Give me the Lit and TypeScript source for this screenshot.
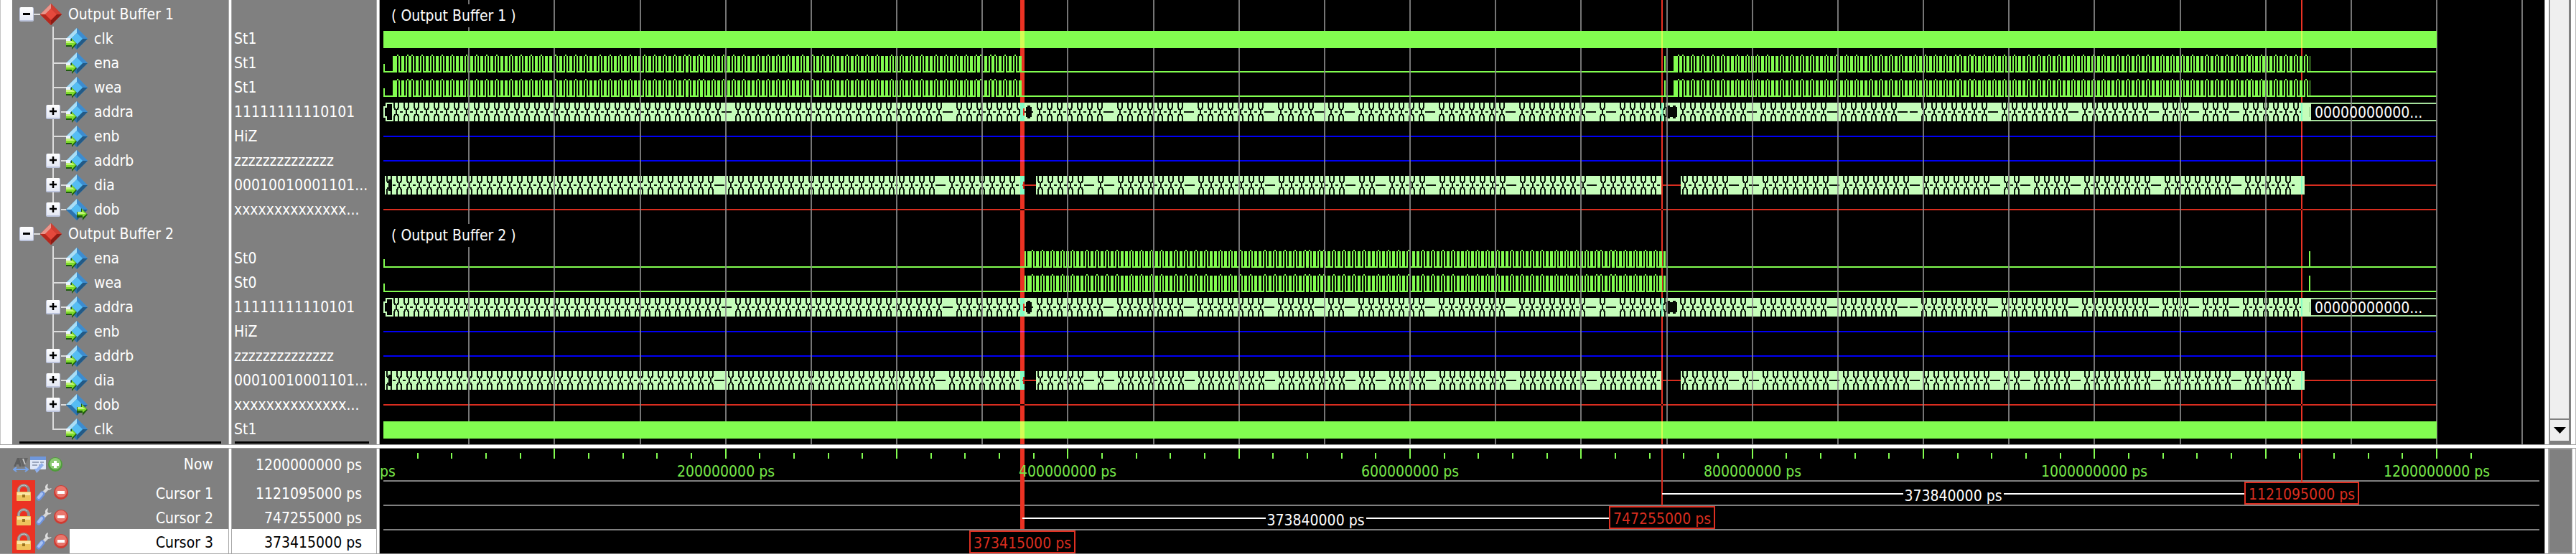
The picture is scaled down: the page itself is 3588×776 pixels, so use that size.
import { LitElement, html, svg, css } from "lit";
import { customElement } from "lit/decorators.js";

type Kind = "group" | "in" | "out";
interface Signal {
  name: string;
  value: string;
  kind: Kind;
  bus?: boolean;
  last?: boolean;
}

const SIGNALS: Signal[] = [
  { name: "Output Buffer 1", value: "", kind: "group" },
  { name: "clk", value: "St1", kind: "in" },
  { name: "ena", value: "St1", kind: "in" },
  { name: "wea", value: "St1", kind: "in" },
  { name: "addra", value: "11111111110101", kind: "in", bus: true },
  { name: "enb", value: "HiZ", kind: "in" },
  { name: "addrb", value: "zzzzzzzzzzzzzz", kind: "in", bus: true },
  { name: "dia", value: "00010010001101...", kind: "in", bus: true },
  { name: "dob", value: "xxxxxxxxxxxxxx...", kind: "out", bus: true, last: true },
  { name: "Output Buffer 2", value: "", kind: "group" },
  { name: "ena", value: "St0", kind: "in" },
  { name: "wea", value: "St0", kind: "in" },
  { name: "addra", value: "11111111110101", kind: "in", bus: true },
  { name: "enb", value: "HiZ", kind: "in" },
  { name: "addrb", value: "zzzzzzzzzzzzzz", kind: "in", bus: true },
  { name: "dia", value: "00010010001101...", kind: "in", bus: true },
  { name: "dob", value: "xxxxxxxxxxxxxx...", kind: "out", bus: true },
  { name: "clk", value: "St1", kind: "in", last: true },
];

const CURSORS = [
  { name: "Cursor 1", time: 1121095000 },
  { name: "Cursor 2", time: 747255000 },
  { name: "Cursor 3", time: 373415000 },
];
const NOW = 1200000000;

/* Plot units: one row is 34 high, the time axis starts at 5 and is 2860 long. */
const VIEW = 3015;
const ROW = 34;
const TOP = 3;
const START = 5;
const SPAN = 2860;
const END = START + SPAN;
const at = (t: number) => Math.round(START + (SPAN * t) / NOW);
const pct = (x: number) => `${(x / VIEW) * 100}%`;
const C1 = at(CURSORS[0].time);
const C2 = at(CURSORS[1].time);
const C3 = at(CURSORS[2].time);
const MARKS: [number, number][] = [[C3 - 3, 6], [C2 - 1, 2], [C1 - 1, 2]];

const GREEN = "#82fd50";
const PALE = "#c5fdba";
const box = (x: number, y: number, w: number, h: number) => `M${x} ${y}h${w}v${h}h${-w}z`;

const PITCH = [14, 6, 14, 14, 14, 14, 20, 14, 14, 14, 20, 14, 14, 14, 20, 14, 14, 14, 20, 14, 14, 14, 20, 14, 14, 14, 14, 6];

/* Enable bursts: narrow strobes, some of them with a capped top. */
function burst(x0: number, x1: number, top: number, shift = 0) {
  let d = "";
  let x = x0;
  let i = shift;
  const bar = (bx: number, w: number) => {
    if (bx < x1) d += box(bx, top + 7, Math.min(w, x1 - bx), 23);
  };
  while (x + 6 <= x1) {
    bar(x, 2);
    bar(x + 4, 2);
    d += box(x + 2, top + 5, 2, 2);
    const p = PITCH[i++ % PITCH.length];
    if (p === 14 || p === 20) bar(x + 8, 4);
    if (p === 20) bar(x + 14, 4);
    if (p === 6) bar(x + 6, 2);
    d += box(x + 5, top + 28, p - 4, 2);
    x += p;
  }
  return d;
}

function enable(row: number, bursts: [number, number, number][], strobes: number[]) {
  const top = TOP + row * ROW;
  let d = box(START, top + 18, 2, 12);
  let x = START;
  for (const [a, b, shift] of bursts) {
    d += box(x, top + 28, a - x, 2) + box(a - 4, top + 7, 4, 23) + burst(a, b, top, shift);
    x = b - 4;
  }
  d += box(x, top + 28, END - x, 2);
  for (const s of strobes) d += box(s, top + 7, 2, 23);
  return svg`<path d=${d} fill=${GREEN} />`;
}

/* Bus values changing too fast to label: a solid band cut by transition marks. */
function dense(x0: number, x1: number, top: number, quiet: number) {
  const fill = box(x0, top + 4, x1 - x0, 26);
  let cut = "";
  let i = 0;
  let x = x0 + 2;
  while (x + 14 <= x1) {
    const wide = x - x0 > quiet ? i % 8 === 7 || i % 29 === 5 : i % 34 === 33;
    if (wide) {
      cut += box(x - 2, top + 16, 11, 2);
    } else {
      cut += box(x, top + 4, 2, 8) + box(x, top + 22, 2, 8);
      cut += box(x + 6, top + 4, 2, 8) + box(x + 6, top + 22, 2, 8);
      cut += box(x + 1, top + 11, 2, 3) + box(x + 1, top + 20, 2, 3);
      cut += box(x + 5, top + 11, 2, 3) + box(x + 5, top + 20, 2, 3);
      cut += box(x + 3, top + 13, 2, 8) + box(x + 9, top + 16, 4, 2);
    }
    x += 14;
    i++;
  }
  return svg`<path d=${fill} fill=${PALE} /><path d=${cut} fill="#0a140a" />`;
}

function notch(x: number, top: number) {
  return svg`<path d=${`M${x + 1} ${top + 10}h2v-2h4v2h2v14h-2v2h-4v-2h-2z`} fill="#050a05" />`;
}

function tint(top: number, h: number, color: string) {
  return MARKS.map(([x, w]) => svg`<rect x=${x} y=${top} width=${w} height=${h} fill=${color} />`);
}

function address(row: number) {
  const top = TOP + row * ROW;
  const tail = 2690;
  return svg`
    <path d=${`M18 ${top + 5}H9V${top + 10}H6V${top + 24}H9V${top + 29}H18`} fill="none" stroke=${PALE} stroke-width="2" />
    ${dense(17, tail, top, 700)}
    ${tint(top + 4, 26, "#84fdc4")}
    ${notch(C3 + 4, top)}${notch(C2 + 4, top)}${notch(C2 + 12, top)}
    <rect x=${C3 + 1} y=${top + 12} width="2" height="10" fill="#eb3223" />
    <rect x=${tail} y=${top + 4} width=${END - tail} height="26" fill="#000" />
    <path d=${`M${tail - 2} ${top + 10}V${top + 24}M${tail} ${top + 5}H${END}M${tail} ${top + 29}H${END}`} fill="none" stroke="#a6e09c" stroke-width="2" />`;
}

function data(row: number) {
  const top = TOP + row * ROW;
  const y = top + 16;
  return svg`
    ${dense(7, C3 + 2, top, 700)}
    ${dense(C3 + 19, C2 - 1, top, 0)}
    ${dense(C2 + 26, C1 + 4, top, 0)}
    ${MARKS.filter((_, i) => i !== 1).map(([x, w]) => svg`<rect x=${x} y=${top + 4} width=${w} height="26" fill="#84fdc4" />`)}
    <path d=${box(12, top + 9, 5, 16)} fill="#050a05" />
    <path d=${box(C3, y, 19, 2) + box(C3 + 1, y - 4, 2, 10) + box(C2 - 1, y, 27, 2) + box(C1 + 4, y, END - C1 - 4, 2)} fill="#d92d1f" />`;
}

function clock(row: number) {
  const top = TOP + row * ROW + 6;
  return svg`<rect x=${START} y=${top} width=${SPAN} height="24" fill=${GREEN} />${tint(top, 24, "#d4fd54")}`;
}

function flat(row: number, color: string, cross: string) {
  const y = TOP + row * ROW + 16;
  return svg`<rect x=${START} y=${y} width=${SPAN} height="2" fill=${color} />${tint(y, 2, cross)}`;
}

const waves = svg`
  ${MARKS.map(([x, w]) => svg`<rect x=${x} y="0" width=${w} height="619" fill="#eb3223" />`)}
  ${enable(2, [[22, C3 + 2, 0], [1806, 2689, 1]], [C2 + 3])}
  ${enable(3, [[22, C3 + 2, 0], [1806, 2689, 1]], [C2 + 3])}
  ${enable(10, [[C3 + 11, C2 + 5, 2]], [C3 + 3, 2687])}
  ${enable(11, [[C3 + 11, C2 + 5, 2]], [C3 + 3, 2687])}
  ${[4, 12].map(address)}
  ${[7, 15].map(data)}
  ${[5, 6, 13, 14].map((r) => flat(r, "#0000f4", "#e032d0"))}
  ${[8, 16].map((r) => flat(r, "#d92d1f", "#200000"))}
  ${Array.from({ length: 25 }, (_, k) => svg`<rect x=${at((k + 1) * 5e7) - 1} y="0" width="2" height="619" fill="#8a8a8a" opacity="0.85" />`)}
  ${[1, 17].map(clock)}`;

const ticks = svg`
  ${Array.from({ length: 62 }, (_, k) => {
    const x = at(k * 2e7);
    return k % 5 === 0 ? svg`` : svg`<rect x=${x - 1} y="6" width="2" height="8" fill=${GREEN} />`;
  })}
  ${Array.from({ length: 12 }, (_, k) => svg`<rect x=${at((k + 1) * 1e8) - 1} y="0" width="2" height="14" fill=${GREEN} />`)}
  ${[44, 78, 112].map((y) => svg`<rect x="5" y=${y} width="3003" height="2" fill="#808080" />`)}
  <rect x=${C1 - 1} y="0" width="2" height="46" fill="#d92d1f" />
  <rect x=${C2 - 1} y="0" width="2" height="79" fill="#d92d1f" />
  <rect x=${C3 - 3} y="0" width="6" height="112" fill="#eb3223" />`;

const redGem = html`<svg class="gem" viewBox="0 0 30 30" aria-hidden="true">
  <path d="M15 0L30 15L15 30L0 15z" fill="#c92c20" />
  <path d="M15 0L0 15L7 15L15 7z" fill="#e8968c" />
  <path d="M15 0L30 15H23L15 7z" fill="#cf3f33" />
  <path d="M30 15L15 30V23L23 15z" fill="#8d1b14" />
  <path d="M0 15L15 30V23L7 15z" fill="#b5281d" />
  <path d="M15 7L23 15L15 23L7 15z" fill="#e5493c" />
</svg>`;

const blueGem = (out: boolean) => html`<svg class="gem" viewBox="0 0 30 30" aria-hidden="true">
  <path d="M15 0L30 15L15 30L0 15z" fill="#3f8fd0" />
  <path d="M15 0L0 15H7L15 7z" fill="#a9def6" />
  <path d="M15 0L30 15H23L15 7z" fill="#3d8ccf" />
  <path d="M30 15L15 30V23L23 15z" fill="#235a86" />
  <path d="M0 15L15 30V23L7 15z" fill="#2b72ad" />
  <path d="M15 7L23 15L15 23L7 15z" fill="#55bdf3" />
  ${out
    ? svg`<path d="M15 18h6v-5l9 9l-7 8v-4h-8z" fill="#1f5a10" /><path d="M16 18h6v-4l7 7l-6 5v-3h-7z" fill="#7fdc2a" /><path d="M16 18h7l4 3h-11z" fill="#c5f57a" />`
    : svg`<path d="M0 14h6v5H0z" fill="#e8f4ff" /><path d="M0 18h7v-4l8 8l-7 8v-4H0z" fill="#1f5a10" /><path d="M0 18h8v-3l6 6l-6 6v-3H0z" fill="#7fdc2a" /><path d="M0 18h8l4 3H0z" fill="#c5f57a" />`}
</svg>`;

const lockIcon = html`<svg width="20" height="24" viewBox="0 0 20 24" aria-hidden="true">
  <path d="M3 12V9a7 7 0 0 1 14 0v3" fill="none" stroke="#8f8f8f" stroke-width="4" />
  <path d="M3 12V9a7 7 0 0 1 12-5" fill="none" stroke="#cfcfcf" stroke-width="1" />
  <rect x="0" y="11" width="20" height="13" rx="1" fill="#eec35c" />
  <rect x="1" y="12" width="18" height="4" fill="#fbe7a4" />
  <rect x="8" y="15" width="4" height="4" fill="#9a7420" />
</svg>`;

const wrenchIcon = html`<svg width="22" height="24" viewBox="0 0 22 24" aria-hidden="true">
  <path d="M10 13L16 7" stroke="#d8d8d8" stroke-width="4" />
  <path d="M17 0a5 5 0 0 0-4 6a5 5 0 0 0 9 0l-4 1l-2-2z" fill="#dedede" />
  <path d="M4 20L9 14" stroke="#6f93dc" stroke-width="7" stroke-linecap="round" />
  <path d="M4 19L8 14" stroke="#a9c3f5" stroke-width="4" stroke-linecap="round" />
</svg>`;

const round = (plus: boolean) => html`<svg width="22" height="22" viewBox="0 0 22 22" aria-hidden="true">
  <circle cx="11" cy="11" r="10" fill=${plus ? "#4f9d3a" : "#cf3b32"} />
  <circle cx="11" cy="10" r="8" fill=${plus ? "#8cc973" : "#e8766c"} />
  <rect x="6" y="9" width="10" height="4" fill="#fff" />
  ${plus ? svg`<rect x="9" y="6" width="4" height="10" fill="#fff" />` : ""}
</svg>`;

const namesIcon = html`<svg width="22" height="22" viewBox="0 0 22 22" aria-hidden="true">
  <path d="M1 14L6 2h3l3 12h-3l-1-3H5l-1 3z" fill="#5e5e5e" />
  <path d="M9 2h12l-5 12h-3z" fill="#666" /><path d="M14 3l3 8" stroke="#c8c8c8" stroke-width="2" />
  <path d="M1 18h19M5 15l-4 3l4 3M17 15l4 3l-4 3" fill="none" stroke="#77a3e8" stroke-width="2" />
</svg>`;

const gridIcon = html`<svg width="22" height="24" viewBox="0 0 22 24" aria-hidden="true">
  <rect x="0" y="1" width="22" height="18" rx="1" fill="#dfe8f8" />
  <rect x="0" y="1" width="22" height="5" fill="#6f97dc" />
  <path d="M3 9h9M14 9h5M3 13h7M12 13h6" stroke="#9aa6bd" stroke-width="2" />
  <path d="M9 24l-3-6h3l7-8l3 3l-7 8z" fill="#8fb0ee" />
</svg>`;

@customElement("app-root")
export class AppRoot extends LitElement {
  static styles = css`
    :host {
      display: block;
      background: #fff;
      color: #fff;
      font: 21px/34px "DejaVu Sans Condensed", "Noto Sans", sans-serif;
    }
    button {
      padding: 0;
      border: 0;
      background: none;
      display: flex;
      align-items: center;
      justify-content: center;
    }
    svg { display: block; flex: none; }
    .upper, .lower { display: grid; }
    .upper { grid-template-columns: 17px 301px 5px 201px 5px minmax(0, 1fr) 7px 30px 7px; }
    .lower { grid-template-columns: 318px 5px 201px 5px minmax(0, 1fr) 6px 33px 5px; }
    .margin { border-left: 1px solid #c4c4c4; }
    .pane { background: #808080; overflow: hidden; white-space: nowrap; }
    .split { border: solid #a9a9a9; border-width: 0 1px; background: #fff; }
    .sash { height: 4px; border: solid #9d9d9d; border-width: 1px 0; background: #fff; }
    .list { padding-top: 3px; }
    .row { height: 34px; display: flex; align-items: center; }
    .value { padding-left: 3px; }
    .group { padding-left: 10px; }
    .signal { padding-left: 44px; }
    .gem { width: 30px; height: 30px; }
    .row .label { padding-left: 9px; }
    .link { width: 9px; height: 2px; background: #dcdcdc; }
    .toggle {
      width: 20px;
      height: 20px;
      border: solid #bcc4dc;
      border-width: 0 1px 2px;
      border-radius: 2px;
      background: linear-gradient(#fff, #e4e8f4);
    }
    .cell { display: flex; align-items: center; width: 31px; height: 34px; }
    .cell.branch {
      background: linear-gradient(#dcdcdc, #dcdcdc) 12px 0 / 2px 100% no-repeat;
    }
    .cell.branch.end { background-size: 2px 50%; }
    .cell .toggle { flex: none; margin-left: 3px; }
    .cell .link { flex: 1; margin-left: 1px; }
    .cell .stem { flex: 1; height: 2px; margin-left: 12px; background: #dcdcdc; }
    .end-mark { display: flex; align-items: flex-start; height: 4px; }
    .end-line { flex: 1; height: 3px; background: #000; }
    .names .end-line { margin: 0 10px; }
    .values .end-line { margin: 0 10px 0 4px; }
    .plot { position: relative; background: #000; overflow: hidden; white-space: nowrap; }
    .plot > svg { width: 100%; }
    .caption {
      position: absolute;
      left: 12px;
      padding: 0 4px;
      line-height: 32px;
      height: 32px;
      background: #000;
    }
    .bus-text { position: absolute; line-height: 34px; }
    .scroll {
      display: flex;
      flex-direction: column;
      justify-content: flex-end;
      background: #efefef;
      border: solid #808080;
      border-width: 0 3px 0 1px;
    }
    .down {
      height: 36px;
      border: solid #808080;
      border-width: 2px 0 5px;
      background: #efefef;
    }
    .edge { border-right: 1px solid #bdbdbd; }
    .block { background: #808080; border: 1px solid #a9a9a9; }
    .now { height: 44px; display: flex; align-items: center; padding: 0 21px 0 17px; }
    .now .label { flex: 1; text-align: right; }
    .tool { width: 24px; height: 24px; }
    .cursor { height: 34px; display: flex; padding-left: 17px; }
    .lock { width: 32px; height: 34px; background: #eb3223; }
    .cursor .tool { height: 34px; }
    .cursor .label { flex: 1; text-align: right; padding: 2px 21px 0 0; height: 32px; }
    .time { text-align: right; padding: 2px 20px 0 0; height: 32px; }
    .time.first { height: 42px; line-height: 42px; }
    .selected { background: #fff; color: #000; }
    .foot { height: 4px; border-top: 1px solid #9d9d9d; background: #fff; }
    .scale, .origin { position: absolute; top: 16px; line-height: 32px; color: #76e549; }
    .scale { transform: translateX(-50%); }
    .origin { left: 0; }
    .flag {
      position: absolute;
      transform: translateX(-50%);
      border: 2px solid #e03022;
      background: #000;
      color: #d92d1f;
      height: 28px;
      line-height: 32px;
      padding: 0 4px;
    }
    .measure {
      position: absolute;
      height: 34px;
      box-sizing: border-box;
      display: flex;
      align-items: center;
      padding-right: 74px;
    }
    .measure.wide { padding-right: 80px; }
    .measure .label { padding: 6px 2px 0; line-height: 28px; }
    .measure .rule { flex: 1; height: 2px; background: #fff; }
  `;

  private nameRow(s: Signal) {
    if (s.kind === "group") {
      return html`<div class="row group">
        <button class="toggle" aria-label="Collapse ${s.name}">
          <svg width="10" height="3" viewBox="0 0 10 3"><path d="M0 0h10v3H0z" /></svg>
        </button>
        <span class="link"></span>${redGem}<span class="label">${s.name}</span>
      </div>`;
    }
    return html`<div class="row signal">
      <span class="cell branch ${s.last ? "end" : ""}">
        ${s.bus
          ? html`<button class="toggle" aria-label="Expand ${s.name}">
                <svg width="10" height="10" viewBox="0 0 10 10"><path d="M0 4h4V0h2v4h4v2H6v4H4V6H0z" stroke="#000" stroke-width="0.5" /></svg></button
              ><span class="link"></span>`
          : html`<span class="stem"></span>`}
      </span>
      ${blueGem(s.kind === "out")}<span class="label">${s.name}</span>
    </div>`;
  }

  private flag(i: number) {
    const c = CURSORS[i];
    return html`<span class="flag" style="left:${pct(at(c.time))};top:${46 + 34 * i}px">${c.time} ps</span>`;
  }

  private measure(i: number) {
    const from = CURSORS[i + 1].time;
    const to = CURSORS[i].time;
    const a = at(from);
    return html`<div class="measure ${i === 0 ? "wide" : ""}" style="left:${pct(a)};width:${pct(at(to) - a)};top:${46 + 34 * i}px">
      <span class="rule"></span><span class="label">${to - from} ps</span><span class="rule"></span>
    </div>`;
  }

  render() {
    return html`
      <div class="upper">
        <div class="margin"></div>
        <div class="pane names">
          <div class="list">${SIGNALS.map((s) => this.nameRow(s))}</div>
          <div class="end-mark"><span class="end-line"></span></div>
        </div>
        <div class="split"></div>
        <div class="pane values">
          <div class="list">${SIGNALS.map((s) => html`<div class="row value">${s.value}</div>`)}</div>
          <div class="end-mark"><span class="end-line"></span></div>
        </div>
        <div class="split"></div>
        <div class="plot">
          <svg height="619" viewBox="0 0 ${VIEW} 619" preserveAspectRatio="none" shape-rendering="crispEdges" aria-hidden="true">${waves}</svg>
          ${[0, 9].map(
            (r) => html`<span class="caption" style="top:${TOP + r * ROW + 3}px">( ${SIGNALS[r].name} )</span>`,
          )}
          ${[4, 12].map(
            (r) => html`<span class="bus-text" style="top:${TOP + r * ROW + 1}px;left:${pct(2695)}">00000000000...</span>`,
          )}
        </div>
        <div class="split"></div>
        <div class="scroll">
          <button class="down" aria-label="Scroll down">
            <svg width="17" height="9" viewBox="0 0 17 9"><path d="M0 0h17L8.500 9z" /></svg>
          </button>
        </div>
        <div class="edge"></div>
      </div>
      <div class="sash"></div>
      <div class="lower">
        <div class="pane">
          <div class="now">
            <button class="tool" aria-label="Toggle names">${namesIcon}</button>
            <button class="tool" aria-label="Grid settings">${gridIcon}</button>
            <button class="tool" aria-label="Add cursor">${round(true)}</button>
            <span class="label">Now</span>
          </div>
          ${CURSORS.map(
            (c, i) => html`<div class="cursor">
              <button class="lock" aria-label="Lock ${c.name}">${lockIcon}</button>
              <button class="tool" aria-label="Edit ${c.name}">${wrenchIcon}</button>
              <button class="tool" aria-label="Remove ${c.name}">${round(false)}</button>
              <span class="label ${i === 2 ? "selected" : ""}">${c.name}</span>
            </div>`,
          )}
        </div>
        <div class="split"></div>
        <div class="pane">
          <div class="time first">${NOW} ps</div>
          ${CURSORS.map((c, i) => html`<div class="time ${i === 2 ? "selected" : ""}">${c.time} ps</div>`)}
        </div>
        <div class="split"></div>
        <div class="plot">
          <svg height="146" viewBox="0 0 ${VIEW} 146" preserveAspectRatio="none" shape-rendering="crispEdges" aria-hidden="true">${ticks}</svg>
          <span class="origin">ps</span>
          ${[2, 4, 6, 8, 10, 12].map(
            (k) => html`<span class="scale" style="left:${pct(at(k * 1e8))}">${k * 1e8} ps</span>`,
          )}
          ${[0, 1].map((i) => this.measure(i))}
          ${[0, 1, 2].map((i) => this.flag(i))}
        </div>
        <div class="split"></div>
        <div class="block"></div>
        <div class="edge"></div>
      </div>
      <div class="foot"></div>
    `;
  }
}
